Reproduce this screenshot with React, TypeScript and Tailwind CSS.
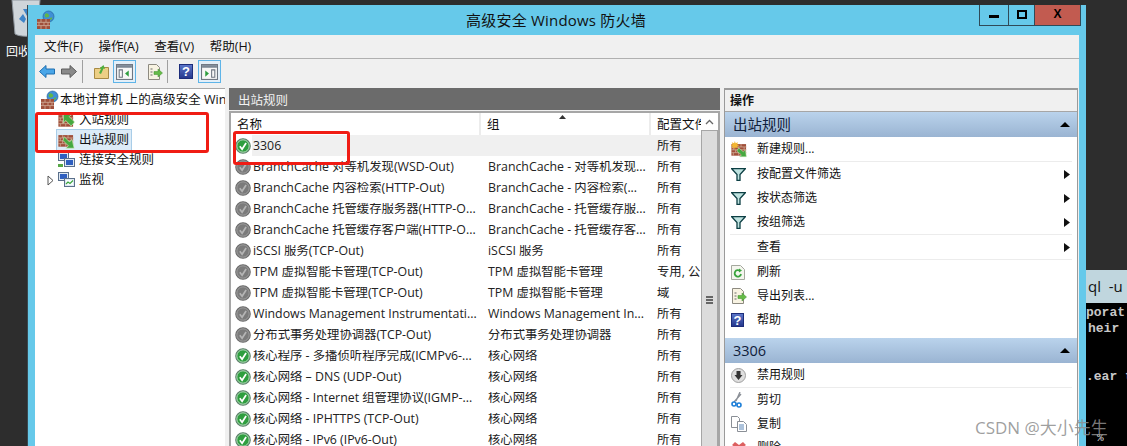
const cjk = "font-['Open_Sans','Noto_Sans_CJK_SC',sans-serif]";

function Wall({ size = 22, overlay }: { size?: number; overlay?: "in" | "out" | "new" }) {
    return (
        <svg width={size} height={size} viewBox="0 0 22 22" className="shrink-0">
            <rect x="0.500" y="4" width="19" height="15" fill="#a04f3a" />
            <path d="M0 7.700h20M0 11.400h20M0 15.100h20M6 4v3.700M13 4v3.700M3 7.700v3.700M10 7.700v3.700M17 7.700v3.700M6 11.400v3.700M13 11.400v3.700M3 15.100v3.900M10 15.100v3.900M17 15.100v3.900" stroke="#d2ae9a" strokeWidth="1" fill="none" />
            {overlay === "in" && <path d="M7 3l11 0-3.500 3 7 7-4.500 5-7-7-3 3.500z" fill="#46a83f" stroke="#d8f0c8" strokeWidth="0.800" />}
            {overlay === "out" && <path d="M8 6l7 7 3-3.500 3 11.500h-11l3.500-3-7-7z" fill="#46a83f" stroke="#d8f0c8" strokeWidth="0.800" />}
            {overlay === "new" && (
                <>
                    <path d="M5 0l1 3 3-1.500-1 3 3 1-3 1 1 3-3-1.500-1 3-1-3-3 1.500 1-3-3-1 3-1-1-3 3 1.500z" fill="#f2b632" />
                    <path d="M10 9l6 5 2.500-2.500 1.500 9h-9l2.500-2.500-6-5z" fill="#46a83f" stroke="#d8f0c8" strokeWidth="0.600" />
                </>
            )}
        </svg>
    );
}

function FirewallGlobe() {
    return (
        <svg width="20" height="20" viewBox="0 0 20 20" className="shrink-0">
            <circle cx="12.500" cy="6.500" r="5.500" fill="#3f8fd6" stroke="#1e5a96" strokeWidth="0.600" />
            <path d="M9 4c2-1.500 3 0 4 1s-1 2.500-2.500 2.500S8 6 9 4zM13.500 8c1.500-.5 3-.5 3-.5l-1.500 3z" fill="#61b548" />
            <rect x="1" y="9" width="13" height="10" fill="#a04f3a" />
            <path d="M1 12.300h13M1 15.600h13M5 9v3.300M10 9v3.300M3 12.300v3.300M8 12.300v3.300M12 12.300v3.300M5 15.600v3.400M10 15.600v3.400" stroke="#d2ae9a" strokeWidth="0.800" fill="none" />
        </svg>
    );
}

function Computers({ pulse }: { pulse?: boolean }) {
    return (
        <svg width="17" height="16" viewBox="0 0 17 16" className="shrink-0">
            <rect x="0.500" y="0.500" width="10" height="8" fill="#dfe8f2" stroke="#5a6f8a" />
            <rect x="2" y="2" width="7" height="5" fill="#2f5fc0" />
            <rect x="6.500" y="6.500" width="10" height="8" fill="#dfe8f2" stroke="#5a6f8a" />
            <rect x="8" y="8" width="7" height="5" fill={pulse ? "#f6fbff" : "#2f5fc0"} />
            {pulse && <path d="M8 12l2-2 2 1.500 3-3" stroke="#3da53d" strokeWidth="1.200" fill="none" />}
            {!pulse && <path d="M0 12h5v3H0z" fill="#57a846" />}
        </svg>
    );
}

function StatusIcon({ on }: { on: boolean }) {
    return (
        <svg width="16" height="16" viewBox="0 0 16 16" className="shrink-0">
            <circle cx="8" cy="8" r="7.200" fill={on ? "#2f9e3f" : "#7b7b7b"} stroke={on ? "#5c7f6a" : "#6a6a6a"} strokeWidth="1.200" />
            <circle cx="8" cy="8" r="6.200" fill="none" stroke={on ? "#d6e8da" : "#a5a5a5"} strokeWidth="0.800" />
            <path d="M4.800 8.300l2.300 3 4-6.300" stroke={on ? "#ffffff" : "#b5b5b5"} strokeWidth="1.700" fill="none" />
        </svg>
    );
}

function PaneIcon({ side }: { side: "left" | "right" }) {
    return (
        <svg width="17" height="16" viewBox="0 0 16 15">
            <rect x="0.500" y="0.500" width="15" height="14" fill="#f7f7f7" stroke="#6d7681" />
            <rect x="1" y="1" width="14" height="2.500" fill="#7b8794" />
            {side === "left" ? (
                <>
                    <path d="M3 5.500h3v7H3z" fill="none" stroke="#6d7681" />
                    <path d="M12 6v6l-3.500-3z" fill="#2e9e3f" />
                </>
            ) : (
                <>
                    <path d="M10 5.500h3v7h-3z" fill="none" stroke="#6d7681" />
                    <path d="M4 6v6l3.500-3z" fill="#2e9e3f" />
                </>
            )}
        </svg>
    );
}

function ExportIcon({ size = 16 }: { size?: number }) {
    return (
        <svg width={size} height={size} viewBox="0 0 16 16" className="shrink-0">
            <path d="M1.500 0.500h8l3 3v12h-11z" fill="#f8f3e2" stroke="#8d8a80" />
            <path d="M3.500 5h2M3.500 8h2M3.500 11h2" stroke="#6a6a6a" />
            <path d="M7 7.500h4V5l4.500 4-4.500 4v-2.500H7z" fill="#66bb47" stroke="#3e8f2c" strokeWidth="0.500" />
        </svg>
    );
}

function HelpIcon({ size = 14 }: { size?: number }) {
    return (
        <div
            style={{ width: size, height: size + 1 }}
            className="flex shrink-0 items-center justify-center border border-[#1c2c7a] bg-gradient-to-b from-[#5b75c8] to-[#27388e] font-['Liberation_Sans',sans-serif] text-[13px] font-bold leading-none text-white"
        >
            ?
        </div>
    );
}

function Filter() {
    return (
        <svg width="15" height="13" viewBox="0 0 15 13" className="shrink-0">
            <path d="M0.500 0.500h14L9 6.500V12.500H6V6.500z" fill="#bfe3e0" stroke="#0d3f44" strokeWidth="1.300" />
        </svg>
    );
}

const rows: { on: boolean; name: string; group: string; profile: string; selected?: boolean }[] = [
    { on: true, name: "3306", group: "", profile: "所有", selected: true },
    { on: false, name: "BranchCache 对等机发现(WSD-Out)", group: "BranchCache - 对等机发现...", profile: "所有" },
    { on: false, name: "BranchCache 内容检索(HTTP-Out)", group: "BranchCache - 内容检索(...", profile: "所有" },
    { on: false, name: "BranchCache 托管缓存服务器(HTTP-O...", group: "BranchCache - 托管缓存服...", profile: "所有" },
    { on: false, name: "BranchCache 托管缓存客户端(HTTP-O...", group: "BranchCache - 托管缓存客...", profile: "所有" },
    { on: false, name: "iSCSI 服务(TCP-Out)", group: "iSCSI 服务", profile: "所有" },
    { on: false, name: "TPM 虚拟智能卡管理(TCP-Out)", group: "TPM 虚拟智能卡管理", profile: "专用, 公" },
    { on: false, name: "TPM 虚拟智能卡管理(TCP-Out)", group: "TPM 虚拟智能卡管理", profile: "域" },
    { on: false, name: "Windows Management Instrumentati...", group: "Windows Management In...", profile: "所有" },
    { on: false, name: "分布式事务处理协调器(TCP-Out)", group: "分布式事务处理协调器", profile: "所有" },
    { on: true, name: "核心程序 - 多播侦听程序完成(ICMPv6-...", group: "核心网络", profile: "所有" },
    { on: true, name: "核心网络 – DNS (UDP-Out)", group: "核心网络", profile: "所有" },
    { on: true, name: "核心网络 - Internet 组管理协议(IGMP-...", group: "核心网络", profile: "所有" },
    { on: true, name: "核心网络 - IPHTTPS (TCP-Out)", group: "核心网络", profile: "所有" },
    { on: true, name: "核心网络 - IPv6 (IPv6-Out)", group: "核心网络", profile: "所有" },
];

function TreeRow({ icon, label, selected, arrow }: { icon: React.ReactNode; label: string; selected?: boolean; arrow?: boolean }) {
    return (
        <div className="flex h-[20px] items-center pl-[8px]">
            <span className="flex w-[14px] justify-center">
                {arrow && (
                    <svg width="7" height="11" viewBox="0 0 7 11">
                        <path d="M1 1l5 4.500-5 4.500z" fill="#fff" stroke="#555" />
                    </svg>
                )}
            </span>
            <div className={`flex h-[20px] items-center gap-[4px] pl-[1px] pr-[2px] ${selected ? "bg-[#dcebf7] outline outline-1 outline-[#a9cde8]" : ""}`}>
                {icon}
                <span className="text-[12.500px] leading-none text-[#111]">{label}</span>
            </div>
        </div>
    );
}

function ActionRow({ icon, label, arrow }: { icon?: React.ReactNode; label: string; arrow?: boolean }) {
    return (
        <div className="flex h-[24px] shrink-0 items-center pl-[6px] pr-[7px]">
            <span className="flex w-[26px] items-center justify-start">{icon}</span>
            <span className="flex-1 text-[12px] leading-none text-[#111]">{label}</span>
            {arrow && (
                <svg width="6" height="9" viewBox="0 0 6 9">
                    <path d="M0 0l6 4.500-6 4.500z" fill="#111" />
                </svg>
            )}
        </div>
    );
}

const Sep = () => <div className="mx-[5px] h-px shrink-0 bg-[#ececec]" />;

function SectionHead({ label }: { label: string }) {
    return (
        <div className="flex h-[25px] shrink-0 items-center justify-between bg-gradient-to-b from-[#bad3ec] to-[#9ab4d2] pl-[8px] pr-[7px]">
            <span className="pt-[2px] text-[14.500px] leading-none text-[#10203a]">{label}</span>
            <svg width="10" height="5" viewBox="0 0 10 5">
                <path d="M0 5l5-5 5 5z" fill="#000" />
            </svg>
        </div>
    );
}

function RecycleBin() {
    return (
        <svg width="30" height="38" viewBox="0 0 30 38">
            <path d="M1 0h28l-3 34c-5 3-17 3-22 0z" fill="#cfd5da" stroke="#8e969e" />
            <path d="M12 9l6 0 2 5-4 2zM8 19l4-5 3 5-2 4zM20 17l3 5-3 4-4-1z" fill="#3f84c8" />
        </svg>
    );
}

export default function App() {
    return (
        <div className={`relative h-[446px] w-[1127px] overflow-hidden bg-[#2d2d2d] ${cjk}`}>
            {/* desktop */}
            <div className="absolute left-[11px] top-0">
                <RecycleBin />
            </div>
            <span className="absolute left-[6px] top-[44px] text-[12px] leading-[15px] text-white">回收</span>

            {/* terminal window behind */}
            <div className="absolute left-[1086px] top-[270px] h-[176px] w-[41px] overflow-hidden bg-black font-['Liberation_Mono',monospace]">
                <div className="flex h-[33px] items-center bg-[#c0d6de] pl-[2px] font-['Open_Sans',sans-serif] text-[15px] leading-none text-[#111]">ql&nbsp;&nbsp;-u</div>
                <div className="mt-[2px] whitespace-nowrap text-[13px] font-bold leading-[16px] text-[#c8c8c8]">
                    <div>porat</div>
                    <div className="pl-[2px]">heir</div>
                    <div className="mt-[32px]">.ear t</div>
                </div>
                <span className="absolute left-[11px] top-[163px] text-[11px] leading-none text-[#ddd]">%</span>
            </div>

            {/* firewall window */}
            <div className="absolute left-[27px] top-[5px] flex h-[441px] w-[1059px] flex-col border-l border-[#3a4a52] bg-[#66c9ea] pl-[7px] pr-[7px]">
                <div className="relative flex h-[30px] shrink-0 items-center">
                    <span className="absolute left-[1px] top-[5px]">
                        <FirewallGlobe />
                    </span>
                    <div className="flex-1 pr-[2px] text-center text-[15px] leading-none tracking-[0.2px] text-[#111]">高级安全 Windows 防火墙</div>
                    <div className="absolute right-[-2px] top-0 flex h-[21px] border border-t-0 border-[#2f4a58]">
                        <div className="flex w-[28px] items-center justify-center">
                            <div className="mt-[3px] h-[3px] w-[10px] bg-black" />
                        </div>
                        <div className="flex w-[26px] items-center justify-center border-l border-[#2f4a58]">
                            <div className="mb-[2px] h-[9px] w-[10px] border-2 border-black" />
                        </div>
                        <div className="flex w-[46px] items-center justify-center border-l border-[#2f4a58] bg-[#c25b50]">
                            <span className="mb-[2px] font-['Liberation_Sans',sans-serif] text-[12px] font-bold leading-none text-black">X</span>
                        </div>
                    </div>
                </div>

                <div className="flex min-h-0 flex-1 flex-col bg-[#f0f0f0]">
                    {/* menu */}
                    <div className="flex h-[24px] shrink-0 items-center gap-[15.600px] border-b border-[#b0b0b0] pl-[9px] pt-[2px] text-[12.500px] leading-none text-[#111]">
                        <span>文件(F)</span>
                        <span>操作(A)</span>
                        <span>查看(V)</span>
                        <span>帮助(H)</span>
                    </div>

                    {/* toolbar */}
                    <div className="flex h-[29px] shrink-0 items-center pb-[4px] pl-[4px]">
                        <svg width="16" height="13" viewBox="0 0 16 13">
                            <path d="M7 0.500L0.500 6.500 7 12.500V9h8.500V4H7z" fill="#4aa6e8" stroke="#1f6fb0" />
                        </svg>
                        <svg width="16" height="13" viewBox="0 0 16 13" className="ml-[6px]">
                            <path d="M9 0.500l6.500 6L9 12.500V9H0.500V4H9z" fill="#8a8a8a" stroke="#5c5c5c" />
                        </svg>
                        <div className="ml-[5px] mr-[11px] h-[23px] w-px bg-[#a0a0a0]" />
                        <svg width="15" height="15" viewBox="0 0 15 15">
                            <path d="M0.500 4.500h5l1-1h8v11h-14z" fill="#edcf85" stroke="#a88a44" />
                            <path d="M5 9l2-4 -1.500-.5L9.500 1 11 5l-1.500-.5L7 10z" fill="#4fae3f" />
                        </svg>
                        <div className="ml-[4px] flex h-[23px] w-[23px] items-center justify-center border border-[#5eb4e8] bg-[#e3eff8]">
                            <PaneIcon side="left" />
                        </div>
                        <span className="ml-[11px]">
                            <ExportIcon />
                        </span>
                        <div className="ml-[4px] mr-[11px] h-[23px] w-px bg-[#a0a0a0]" />
                        <HelpIcon />
                        <div className="ml-[5px] flex h-[23px] w-[23px] items-center justify-center border border-[#5eb4e8] bg-[#e3eff8]">
                            <PaneIcon side="right" />
                        </div>
                    </div>

                    {/* panes */}
                    <div className="flex min-h-0 flex-1 gap-[4px] pr-[1px]">
                        <div className="w-[190px] shrink-0 overflow-hidden border-t border-[#a8a8a8] bg-white pt-[1px]">
                            <div className="flex h-[20px] items-center whitespace-nowrap pl-[5px] text-[12.500px] leading-none text-[#111]">
                                <FirewallGlobe />
                                <span>本地计算机 上的高级安全 Wind</span>
                            </div>
                            <TreeRow icon={<Wall size={17} overlay="in" />} label="入站规则" />
                            <TreeRow icon={<Wall size={17} overlay="out" />} label="出站规则" selected />
                            <TreeRow icon={<Computers />} label="连接安全规则" />
                            <TreeRow icon={<Computers pulse />} label="监视" arrow />
                        </div>

                        <div className="flex w-[491px] shrink-0 flex-col">
                            <div className="flex h-[22px] shrink-0 items-center bg-[#6b6b6b] pl-[9px] pt-[4px] text-[12.500px] leading-none text-[#f2f2f2]">出站规则</div>
                            <div className="mt-[1px] flex min-h-0 flex-1 border-x-2 border-t-2 border-[#a6a6a6] bg-white">
                                <div className="flex min-w-0 flex-1 flex-col overflow-hidden">
                                    <div className="flex h-[22px] shrink-0 items-center text-[12.500px] leading-none text-[#111]">
                                        <div className="flex h-full w-[250px] items-center border-r-2 border-[#ececec] pl-[6px] pt-[3px]">名称</div>
                                        <div className="relative flex h-full w-[170px] items-center border-r-2 border-[#ececec] pl-[6px] pt-[3px]">
                                            组
                                            <svg width="7" height="4" viewBox="0 0 7 4" className="absolute left-[78px] top-[2px]">
                                                <path d="M0 4l3.500-4 3.500 4z" fill="#333" />
                                            </svg>
                                        </div>
                                        <div className="flex h-full flex-1 items-center overflow-hidden whitespace-nowrap pl-[6px] pt-[3px]">配置文件</div>
                                    </div>
                                    {rows.map((r, i) => (
                                        <div key={i} className="flex h-[21px] shrink-0 items-center text-[12.350px] leading-none text-[#222]">
                                            <span className="flex w-[21px] shrink-0 justify-end pr-[1px]">
                                                <StatusIcon on={r.on} />
                                            </span>
                                            <div className={`flex h-full min-w-0 flex-1 items-center pt-[2px] ${r.selected ? "bg-[#f0f0f0]" : ""}`}>
                                                <div className="w-[229px] shrink-0 overflow-hidden whitespace-nowrap pl-[1px]">{r.name}</div>
                                                <div className="w-[170px] shrink-0 overflow-hidden whitespace-nowrap pl-[7px]">{r.group}</div>
                                                <div className="min-w-0 flex-1 overflow-hidden whitespace-nowrap pl-[6px]">{r.profile}</div>
                                            </div>
                                        </div>
                                    ))}
                                </div>
                                <div className="flex w-[17px] shrink-0 flex-col bg-[#dcdcdc]">
                                    <div className="flex h-[17px] items-center justify-center bg-white">
                                        <svg width="9" height="6" viewBox="0 0 9 6">
                                            <path d="M1 5l3.500-3.500L8 5" stroke="#666" strokeWidth="1.300" fill="none" />
                                        </svg>
                                    </div>
                                    <div className="flex flex-1 flex-col items-center border-x border-t border-[#a6a6a6] pt-[165px]">
                                        <div className="flex flex-col gap-[1px]">
                                            <div className="h-[2px] w-[7px] bg-[#666]" />
                                            <div className="h-[2px] w-[7px] bg-[#666]" />
                                            <div className="h-[2px] w-[7px] bg-[#666]" />
                                        </div>
                                    </div>
                                </div>
                            </div>
                        </div>

                        <div className="flex min-h-0 flex-1 flex-col overflow-hidden border-x border-t-2 border-[#9a9a9a] bg-white">
                            <div className="flex h-[22px] shrink-0 items-center border-b border-[#a6a6a6] bg-[#f0f0f0] pl-[5px] pt-[1px] text-[12px] font-bold leading-none text-[#111]">操作</div>
                            <SectionHead label="出站规则" />
                            <ActionRow icon={<Wall size={17} overlay="new" />} label="新建规则..." />
                            <Sep />
                            <ActionRow icon={<Filter />} label="按配置文件筛选" arrow />
                            <ActionRow icon={<Filter />} label="按状态筛选" arrow />
                            <ActionRow icon={<Filter />} label="按组筛选" arrow />
                            <Sep />
                            <ActionRow label="查看" arrow />
                            <Sep />
                            <ActionRow
                                icon={
                                    <svg width="14" height="15" viewBox="0 0 14 15">
                                        <path d="M0.500 0.500h9l4 4v10h-13z" fill="#f4f6ee" stroke="#a5a89e" />
                                        <path d="M10 9a3.200 3.200 0 1 1-1-3" stroke="#38a33c" strokeWidth="1.800" fill="none" />
                                        <path d="M8 3.500l3 2-3 2z" fill="#38a33c" />
                                    </svg>
                                }
                                label="刷新"
                            />
                            <ActionRow icon={<ExportIcon />} label="导出列表..." />
                            <ActionRow icon={<HelpIcon size={13} />} label="帮助" />
                            <div className="h-[6px] shrink-0" />
                            <SectionHead label="3306" />
                            <ActionRow
                                icon={
                                    <svg width="15" height="15" viewBox="0 0 15 15">
                                        <circle cx="7.500" cy="7.500" r="7" fill="#dedede" stroke="#a0a0a0" />
                                        <path d="M5.500 3h4v4h2l-4 5-4-5h2z" fill="#333" />
                                    </svg>
                                }
                                label="禁用规则"
                            />
                            <Sep />
                            <ActionRow
                                icon={
                                    <svg width="13" height="16" viewBox="0 0 13 16">
                                        <path d="M9 0L5 9M10 2L3 10" stroke="#8a8f96" strokeWidth="1.300" />
                                        <circle cx="3" cy="12" r="2" fill="none" stroke="#1d7fd8" strokeWidth="1.600" />
                                        <circle cx="8" cy="13" r="2" fill="none" stroke="#1d7fd8" strokeWidth="1.600" />
                                    </svg>
                                }
                                label="剪切"
                            />
                            <ActionRow
                                icon={
                                    <svg width="16" height="16" viewBox="0 0 16 16">
                                        <path d="M0.500 0.500h6l2 2v9h-8z" fill="#fff" stroke="#8a8f96" />
                                        <path d="M6.500 5.500h6l3 3v7h-9z" fill="#fff" stroke="#8a8f96" />
                                        <path d="M8 9h5M8 11h5M8 13h5" stroke="#5b86b8" />
                                    </svg>
                                }
                                label="复制"
                            />
                            <ActionRow
                                icon={
                                    <svg width="16" height="12" viewBox="0 0 16 12">
                                        <path d="M1 3l3-3 4 3 4-3 3 3-4 3 4 4-3 3-4-4-4 4-3-3 4-4z" fill="#dc5f5f" />
                                    </svg>
                                }
                                label="删除"
                            />
                        </div>
                    </div>
                </div>
            </div>

            {/* red annotation boxes */}
            <div className="absolute left-[35px] top-[112px] h-[41px] w-[174px] rounded-[3px] border-[3px] border-[#f01c14]" />
            <div className="absolute left-[233px] top-[131px] h-[34px] w-[117px] rounded-[3px] border-[3px] border-[#f01c14]" />

            {/* watermark */}
            <span className="absolute left-[975px] top-[419px] text-[17px] leading-none text-[#8e8e8e]/85">CSDN @大小先生</span>
        </div>
    );
}
